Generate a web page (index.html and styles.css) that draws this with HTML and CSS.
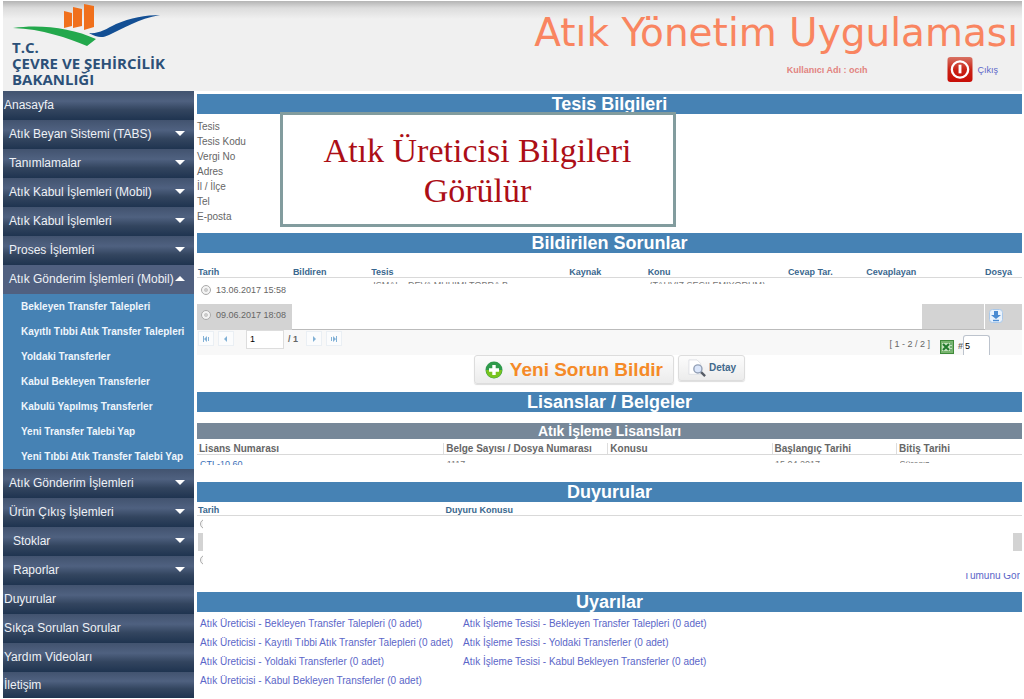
FILE: index.html
```html
<!DOCTYPE html>
<html lang="tr">
<head>
<meta charset="utf-8">
<title>Atık Yönetim Uygulaması</title>
<link rel="stylesheet" href="styles.css">
</head>
<body>
<header class="top">
  <div class="brand">
    <svg class="brand-mark" viewBox="0 0 150 43" aria-hidden="true">
      <path fill="#f0701c" d="M52 7l8 2v13l-8 2zM61 3l9 2v17l-9 2zM72 0l10 2v21l-10 3z"/>
      <path fill="#23a84c" d="M1 24C28 20 60 24 84 35l-9 7C56 34 30 25 1 24z"/>
      <path fill="#134f94" d="M77 29c10 1 17-4 27-9 14-6 30-9 44-9-22 4-36 13-51 20-6 3-12 3-20-2z"/>
    </svg>
    <div class="brand-name">T.C.<br>ÇEVRE VE ŞEHİRCİLİK<br>BAKANLIĞI</div>
  </div>
  <div class="app">
    <h1>Atık Yönetim Uygulaması</h1>
    <div class="user">
      <span class="user-name">Kullanıcı Adı : ocıh</span>
      <a class="exit" href="#">
        <svg viewBox="0 0 26 26" aria-hidden="true">
          <defs><linearGradient id="red" x2="0" y2="1"><stop stop-color="#d87263"/><stop offset=".5" stop-color="#c92315"/><stop offset="1" stop-color="#c80e08"/></linearGradient></defs>
          <rect width="26" height="26" rx="3" fill="url(#red)"/>
          <circle cx="13" cy="13" r="8.5" fill="none" stroke="#fff" stroke-width="2.4"/>
          <path d="M13 8v9" stroke="#fff" stroke-width="3"/>
        </svg>
        Çıkış</a>
    </div>
  </div>
</header>
<div class="layout">
  <nav class="menu">
    <a class="item root" href="#">Anasayfa</a>
    <button class="item">Atık Beyan Sistemi (TABS)</button>
    <button class="item">Tanımlamalar</button>
    <button class="item">Atık Kabul İşlemleri (Mobil)</button>
    <button class="item">Atık Kabul İşlemleri</button>
    <button class="item">Proses İşlemleri</button>
    <button class="item open">Atık Gönderim İşlemleri (Mobil)</button>
    <div class="submenu">
      <a href="#">Bekleyen Transfer Talepleri</a>
      <a href="#">Kayıtlı Tıbbi Atık Transfer Talepleri</a>
      <a href="#">Yoldaki Transferler</a>
      <a href="#">Kabul Bekleyen Transferler</a>
      <a href="#">Kabulü Yapılmış Transferler</a>
      <a href="#">Yeni Transfer Talebi Yap</a>
      <a href="#">Yeni Tıbbi Atık Transfer Talebi Yap</a>
    </div>
    <button class="item">Atık Gönderim İşlemleri</button>
    <button class="item">Ürün Çıkış İşlemleri</button>
    <button class="item inner">Stoklar</button>
    <button class="item inner">Raporlar</button>
    <a class="item root" href="#">Duyurular</a>
    <a class="item root" href="#">Sıkça Sorulan Sorular</a>
    <a class="item root" href="#">Yardım Videoları</a>
    <a class="item root last" href="#">İletişim</a>
  </nav>
  <main>
    <section class="facility">
      <h2>Tesis Bilgileri</h2>
      <ul class="fields">
        <li>Tesis</li><li>Tesis Kodu</li><li>Vergi No</li><li>Adres</li><li>İl / İlçe</li><li>Tel</li><li>E-posta</li>
      </ul>
      <p class="callout">Atık Üreticisi Bilgileri Görülür</p>
    </section>

    <section>
      <h2>Bildirilen Sorunlar</h2>
      <table class="issues">
        <colgroup><col class="w-date"><col class="w-s"><col class="w-site"><col class="w-s"><col class="w-topic"><col class="w-s"><col class="w-reply"><col></colgroup>
        <thead><tr><th>Tarih</th><th>Bildiren</th><th>Tesis</th><th>Kaynak</th><th>Konu</th><th>Cevap Tar.</th><th>Cevaplayan</th><th>Dosya</th></tr></thead>
        <tbody>
          <tr><td><label><input type="radio" name="issue">13.06.2017 15:58</label></td><td></td><td class="cut"><div class="sliver">İSMAL - DEVA MÜHİMİ TOBRA B</div></td><td></td><td class="cut"><div class="sliver">(TAHVİZ SEÇİLEMİYORUM)</div></td><td></td><td></td><td></td></tr>
          <tr class="alt"><td class="fill"><label><input type="radio" name="issue">09.06.2017 18:08</label></td><td></td><td></td><td></td><td></td><td></td><td class="half"></td>
            <td class="fill file"><button class="download" aria-label="Dosya indir"><svg viewBox="0 0 14 14" aria-hidden="true"><rect x=".5" y=".5" width="13" height="13" rx="3" fill="#e9f2fc" stroke="#a9c8ea"/><path d="M5 2h4v4h3l-5 4-5-4h3z" fill="#4a8bd2"/><path d="M4 11.5h6" stroke="#4a8bd2" stroke-width="1.4"/></svg></button></td></tr>
        </tbody>
      </table>
      <div class="pager">
        <button aria-label="İlk"><svg viewBox="0 0 8 8"><path d="M1 1h1v6H1zM5 1v6L2 4zM6 2h1v4H6z"/></svg></button>
        <button aria-label="Önceki"><svg viewBox="0 0 8 8"><path d="M5 1v6L2 4z"/></svg></button>
        <input class="page" aria-label="Sayfa" value="1">
        <b>/ 1</b>
        <button aria-label="Sonraki"><svg viewBox="0 0 8 8"><path d="M3 1v6l3-3z"/></svg></button>
        <button aria-label="Son"><svg viewBox="0 0 8 8"><path d="M1 2h1v4H1zM3 1v6l3-3zM6 1h1v6H6z"/></svg></button>
        <span class="range">[ 1 - 2 / 2 ]</span>
        <svg class="excel" viewBox="0 0 14 14" aria-hidden="true"><rect x=".5" y=".5" width="13" height="13" fill="#79b56f" stroke="#3f8a3a"/><rect x="2" y="3" width="10" height="8" fill="#c4e2bd"/><path d="M3 4l6 6M9 4l-6 6" stroke="#217a2c" stroke-width="2"/><path d="M10 4h2M10 7h2M10 10h2" stroke="#217a2c"/></svg>
        <label class="size"><b>#</b><input value="5"></label>
      </div>
      <div class="actions">
        <button class="btn big"><svg viewBox="0 0 18 18" aria-hidden="true"><circle cx="9" cy="9" r="8.5" fill="#2f9a4c"/><path d="M1 9a8 8 0 0 0 16 0z" fill="#79c41e"/><path d="M9 4v10M4 9h10" stroke="#fff" stroke-width="3.4"/></svg>Yeni Sorun Bildir</button>
        <button class="btn small"><svg viewBox="0 0 20 20" aria-hidden="true"><path d="M1 1h9l4 4v12H1z" fill="#fff" stroke="#dcdfe3"/><path d="M14 14l5 5" stroke="#565c66" stroke-width="2.6"/><circle cx="11" cy="11" r="4.5" fill="#dbe6fa" stroke="#93a0b6" stroke-width="1.6"/></svg>Detay</button>
      </div>
    </section>

    <section>
      <h2>Lisanslar / Belgeler</h2>
      <h3>Atık İşleme Lisansları</h3>
      <table class="licences">
        <colgroup><col class="w-lic"><col class="w-doc"><col class="w-subj"><col class="w-start"><col></colgroup>
        <thead><tr><th>Lisans Numarası</th><th>Belge Sayısı / Dosya Numarası</th><th>Konusu</th><th>Başlangıç Tarihi</th><th>Bitiş Tarihi</th></tr></thead>
        <tbody><tr><td><a class="sliver tall" href="#">ÇTL-10.60</a></td><td><div class="sliver">1117</div></td><td></td><td><div class="sliver">15.04.2017</div></td><td><div class="sliver">Süresiz</div></td></tr></tbody>
      </table>
    </section>

    <section>
      <h2>Duyurular</h2>
      <table class="news">
        <colgroup><col class="w-news"><col></colgroup>
        <thead><tr><th>Tarih</th><th>Duyuru Konusu</th></tr></thead>
        <tbody>
          <tr><td><span class="edge"><input type="radio" name="news" aria-label="Duyuru 1"></span></td><td></td></tr>
          <tr class="shade"><td></td><td></td></tr>
          <tr><td><span class="edge"><input type="radio" name="news" aria-label="Duyuru 3"></span></td><td></td></tr>
        </tbody>
      </table>
      <div class="more"><a href="#">Tümünü Gör</a></div>
    </section>

    <section>
      <h2>Uyarılar</h2>
      <div class="alerts">
        <a href="#">Atık Üreticisi - Bekleyen Transfer Talepleri (0 adet)</a>
        <a href="#">Atık İşleme Tesisi - Bekleyen Transfer Talepleri (0 adet)</a>
        <a href="#">Atık Üreticisi - Kayıtlı Tıbbi Atık Transfer Talepleri (0 adet)</a>
        <a href="#">Atık İşleme Tesisi - Yoldaki Transferler (0 adet)</a>
        <a href="#">Atık Üreticisi - Yoldaki Transferler (0 adet)</a>
        <a href="#">Atık İşleme Tesisi - Kabul Bekleyen Transferler (0 adet)</a>
        <a href="#">Atık Üreticisi - Kabul Bekleyen Transferler (0 adet)</a>
      </div>
    </section>
  </main>
</div>
</body>
</html>
```
FILE: styles.css
```css
* { box-sizing: border-box; }
body { margin: 0; padding: 1px 2px 1px 3px; background: #fff; color: #666; font: 10px/12px "Liberation Sans", Arial, sans-serif; }
h1, h2, h3, p, ul { margin: 0; padding: 0; font-weight: normal; }
a { color: #5b66c8; text-decoration: none; }
button, input { font: inherit; margin: 0; }
button { border: 0; padding: 0; cursor: pointer; }

.top { display: flex; justify-content: space-between; height: 90px; background: linear-gradient(#b4b4b4, #dcdcdc 7px, #f0f0f0 18px); }
.brand { padding: 3px 0 0 9px; }
.brand-mark { display: block; width: 150px; height: 43px; }
.brand-name { margin-top: -8px; color: #2c5078; font: bold 15px/16px "Open Sans", sans-serif; }
.app { padding: 8px 4px 0 0; }
h1 { color: #f98560; font: 39px/48px "DejaVu Sans", Verdana, sans-serif; text-align: right; }
.user { display: flex; justify-content: flex-end; align-items: center; gap: 80px; padding-right: 20px; }
.user-name { color: #e2837f; font-weight: bold; font-size: 9px; }
.exit { display: flex; align-items: center; gap: 4px; font-size: 9px; }
.exit svg { width: 26px; height: 25px; }

.layout { display: grid; grid-template-columns: 191px 1fr; column-gap: 3px; }
.menu { display: flex; flex-direction: column; }
.item { display: flex; justify-content: space-between; align-items: center; height: 29px; padding: 0 9px 2px 6px; color: #eef1f6; font-size: 12px; text-align: left; background: linear-gradient(#42536f, #4f6180 35%, #33455f 65%, #1f3450); }
.item.root { padding-left: 1px; }
.item.inner { padding-left: 10px; }
.item.last { height: 26px; padding-bottom: 0; }
button.item::after { content: ""; border: 5px solid transparent; border-top-color: #fff; border-bottom: 0; }
button.item.open { background: #506080; }
button.item.open::after { border-bottom: 5px solid #fff; border-top: 0; }
.submenu { background: #4682b4; }
.submenu a { display: block; height: 25px; padding-left: 18px; color: #eff6fc; font: bold 10px/25px "Liberation Sans", Arial, sans-serif; white-space: nowrap; }

main { padding-top: 3px; }
h2 { height: 20px; background: #4682b4; color: #fff; font-size: 18px; font-weight: bold; line-height: 20px; text-align: center; }
.facility { position: relative; height: 139px; }
.fields { list-style: none; padding-top: 5px; line-height: 15px; }
.callout { position: absolute; left: 10%; top: 18px; width: 48%; height: 115px; padding: 16px 20px; border: 3px solid #829c9e; background: #fff; color: #ac0e16; font: 34px/40px "Liberation Serif", "Times New Roman", serif; text-align: center; }

table { width: 100%; border-collapse: collapse; table-layout: fixed; }
th { padding: 0 0 0 1px; text-align: left; font-size: 9px; line-height: 10px; white-space: nowrap; border-bottom: 1px solid #d9d9d9; color: #3a678e; }
td { padding: 0; }
.sliver { display: block; height: 2px; margin-left: 3px; overflow: hidden; font-size: 9px; line-height: 6px; white-space: nowrap; color: #777; }
.sliver.tall { height: 4px; line-height: 7px; color: #3d6fb8; }
input[type=radio] { appearance: none; width: 10px; height: 10px; border: 1px solid #aaa; border-radius: 50%; background: radial-gradient(#ccc 30%, #f4f4f4 40%); }

.issues { margin-top: 14px; }
.issues td { height: 26px; }
.issues label { display: flex; align-items: center; gap: 5px; padding: 0 0 2px 4px; font-size: 9px; white-space: nowrap; }
.issues .cut { vertical-align: top; padding-top: 4px; }
.issues .alt td { border-bottom: 1px solid #bbb; }
.issues .alt .fill { background: #d3d3d3; border-bottom-color: #d3d3d3; }
.issues .alt .half { background: linear-gradient(90deg, #fff 48%, #d3d3d3 48%); }
.issues .alt .file { border-left: 1px solid #fff; padding-left: 4px; }
.download { display: block; background: none; }
.download svg { display: block; width: 14px; height: 14px; }
.w-date { width: 11.5%; } .w-s { width: 9.5%; } .w-site { width: 24%; } .w-topic { width: 17%; } .w-reply { width: 14.4%; }

.pager { display: flex; align-items: flex-start; height: 25px; padding: 0 32px 0 1px; gap: 4px; background: #f8f8f8; font-size: 9px; }
.pager button { width: 16px; height: 15px; margin-top: 1px; border: 1px solid #eaeff4; background: #fbfcfd; }
.pager button svg { display: block; width: 8px; height: 8px; margin: auto; fill: #82b1d6; }
.pager b { margin-top: 3px; }
.page { width: 38px; height: 19px; margin-left: 8px; padding: 0 3px 2px; border: 1px solid #ddd; }
.page + b { margin-right: 4px; }
.range { margin: 8px 6px 0 auto; }
.excel { width: 14px; height: 14px; margin-top: 10px; }
.size { display: flex; align-self: stretch; }
.size b { margin-top: 10px; }
.size input { width: 27px; height: 20px; margin-top: 5px; padding: 1px 1px 0; border: 1px solid #bcc3cd; border-bottom: 0; border-radius: 3px 3px 0 0; }
.actions { display: flex; justify-content: center; align-items: flex-start; gap: 4px; padding-bottom: 8px; }
.btn { display: flex; align-items: center; border: 1px solid #ddd; border-radius: 3px; background: linear-gradient(#fcfcfc, #ececec); box-shadow: 0 1px 1px #ddd; font-weight: bold; }
.btn.big { height: 29px; gap: 7px; padding: 0 10px; color: #f58a28; font-size: 19px; }
.btn.big svg { width: 18px; height: 18px; }
.btn.small { height: 26px; gap: 2px; padding: 0 8px; color: #42698c; }
.btn.small svg { width: 20px; height: 18px; }

h3 { height: 16px; margin-top: 11px; background: #778899; color: #fff; font-size: 14px; font-weight: bold; line-height: 16px; text-align: center; }
.licences { margin-top: 4px; margin-bottom: 16px; }
.licences th { color: #666; font-size: 10px; line-height: 11px; padding-left: 2px; border-left: 1px solid #ddd; }
.licences th:first-child { border-left: 0; }
.licences td { height: 11px; padding-top: 6px; vertical-align: top; }
.w-lic { width: 29.9%; } .w-doc { width: 19.9%; } .w-subj { width: 19.9%; } .w-start { width: 15.1%; }

.news { margin-top: 3px; }
.news td { height: 18px; }
.w-news { width: 30%; }
.edge { display: block; width: 3px; height: 10px; margin-left: 3px; overflow: hidden; }
.edge input { display: block; }
.shade td:first-child { background: linear-gradient(90deg, #fff 1px, #d3d3d3 1px 6px, #fff 6px); }
.shade td:last-child { background: linear-gradient(270deg, #d3d3d3 9px, #fff 9px); }
.more { display: flex; justify-content: flex-end; align-items: flex-end; height: 9px; margin: 4px 2px 10px 0; overflow: hidden; }
.alerts { display: grid; grid-template-columns: 263px 1fr; padding: 2px 0 0 3px; line-height: 19px; white-space: nowrap; }
```
